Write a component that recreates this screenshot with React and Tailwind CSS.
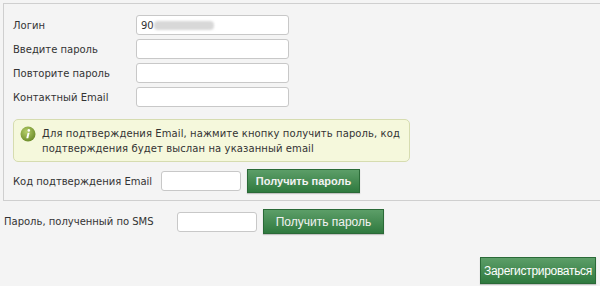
import React from 'react';

const font = { fontFamily: '"DejaVu Sans", Verdana, sans-serif' };

const Field = ({ label, value }) => (
  <div className="flex items-center h-[24px]">
    <span className="w-[123px] text-[10px] text-[#333] whitespace-nowrap">{label}</span>
    <div className="w-[153px] h-[20px] bg-white border border-[#c8c8c8] rounded-[3px] flex items-center px-[4px] text-[10px] text-[#333]">
      {value}
    </div>
  </div>
);

const InfoIcon = () => (
  <svg width="16" height="16" viewBox="0 0 16 16" className="shrink-0">
    <defs>
      <radialGradient id="ig" cx="40%" cy="35%" r="65%">
        <stop offset="0%" stopColor="#b6cf6a" />
        <stop offset="100%" stopColor="#6f8e2c" />
      </radialGradient>
    </defs>
    <circle cx="8" cy="8" r="7.5" fill="url(#ig)" />
    <circle cx="8.8" cy="4.4" r="1.3" fill="#fff" />
    <path d="M7.6 6.8h2l-1.3 5.4h-2z" fill="#fff" />
  </svg>
);

const btnFont = { fontFamily: '"Liberation Sans", Arial, sans-serif' };

export default function App() {
  return (
    <div className="w-[600px] h-[286px] bg-[#f4f4f4] overflow-hidden" style={font}>
      <div className="ml-[3px] mt-[3px] border-t border-l border-b border-[#cfcfcf] pl-[9px] pt-[9px] h-[198px]">
        <Field label="Логин" value={<span className="flex items-center">90<span className="w-[60px] h-[9px] bg-[#d8d8d8] rounded-[4px] blur-[1px]" /></span>} />
        <Field label="Введите пароль" />
        <Field label="Повторите пароль" />
        <Field label="Контактный Email" />
        <div className="mt-[10px] w-[397px] h-[43px] bg-[#f5f8dc] border border-[#d6dcb0] rounded-[5px] flex items-start pl-[6px] pt-[6px]">
          <InfoIcon />
          <p className="ml-[6px] text-[10px] tracking-[0.1px] leading-[15px] text-[#333]">
            Для подтверждения Email, нажмите кнопку получить пароль, код подтверждения будет выслан на указанный email
          </p>
        </div>
        <div className="flex items-center mt-[7px]">
          <span className="w-[148px] text-[10px] text-[#333] whitespace-nowrap">Код подтверждения Email</span>
          <div className="w-[80px] h-[20px] bg-white border border-[#c8c8c8] rounded-[3px]" />
          <button
            className="ml-[6px] w-[113px] h-[24px] bg-gradient-to-b from-[#5c9e68] to-[#2f7a3f] border border-[#2a6a37] text-[#f2f2f2] text-[11px] font-bold shadow-[0_1px_1px_rgba(0,0,0,0.2)]"
            style={btnFont}
          >
            Получить пароль
          </button>
        </div>
      </div>
      <div className="flex items-center pl-[4px] mt-[8px]">
        <span className="w-[173px] text-[10px] text-[#333] whitespace-nowrap">Пароль, полученный по SMS</span>
        <div className="w-[80px] h-[20px] bg-white border border-[#c8c8c8] rounded-[3px]" />
        <button
          className="ml-[6px] w-[121px] h-[25px] bg-gradient-to-b from-[#5c9e68] to-[#2f7a3f] border border-[#2a6a37] text-[#f2f2f2] text-[12px] shadow-[0_1px_1px_rgba(0,0,0,0.2)]"
          style={btnFont}
        >
          Получить пароль
        </button>
      </div>
      <div className="flex justify-end pr-[4px] mt-[23px]">
        <button
          className="w-[116px] h-[27px] bg-gradient-to-b from-[#5c9e68] to-[#2f7a3f] border border-[#2a6a37] text-white text-[12px] tracking-[-0.3px] shadow-[0_1px_1px_rgba(0,0,0,0.2)]"
          style={btnFont}
        >
          Зарегистрироваться
        </button>
      </div>
    </div>
  );
}
